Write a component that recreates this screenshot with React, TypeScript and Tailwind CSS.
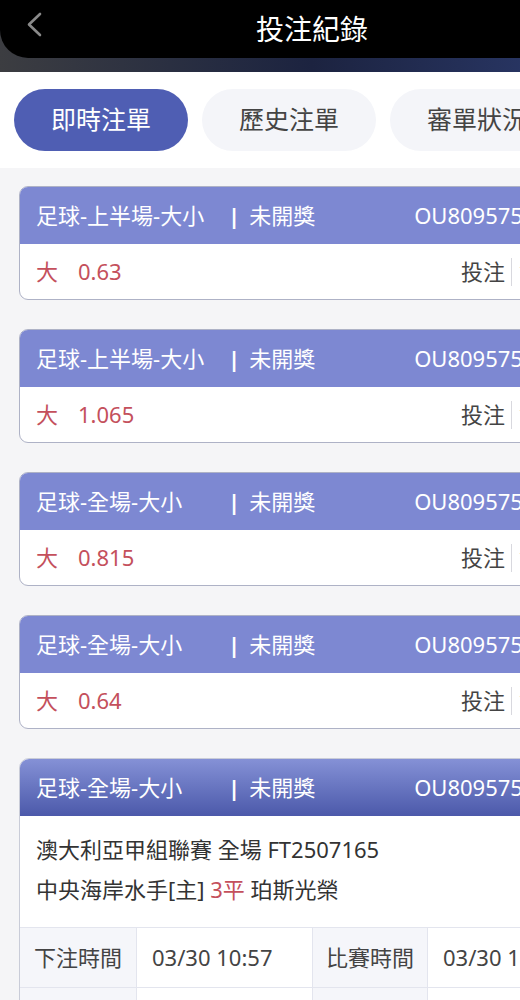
import React from "react";

const BETS = [
  { type: "足球-上半場-大小", pick: "大", odds: "0.63" },
  { type: "足球-上半場-大小", pick: "大", odds: "1.065" },
  { type: "足球-全場-大小", pick: "大", odds: "0.815" },
  { type: "足球-全場-大小", pick: "大", odds: "0.64" },
];

const TABS = ["即時注單", "歷史注單", "審單狀況"];

function CardHeader({ type, gradient }: { type: string; gradient?: boolean }) {
  return (
    <div
      className={
        "flex h-[57px] items-center pl-[16px] text-[22px] text-white " +
        (gradient ? "bg-gradient-to-b from-[#8591d6] to-[#4c59aa]" : "bg-[#7d88d2]")
      }
    >
      <span className="w-[192px] shrink-0">{type}</span>
      <span className="font-bold">|</span>
      <span className="ml-[9px] w-[165px] shrink-0">未開獎</span>
      <span className="whitespace-nowrap">OU8095751428</span>
    </div>
  );
}

export default function App() {
  return (
    <div
      className="min-h-[1000px] w-full overflow-hidden bg-[#f5f5f7]"
      style={{ fontFamily: '"Noto Sans", "Noto Sans CJK TC", sans-serif' }}
    >
      <div className="w-[624px]">
        {/* ── 頂部標題 ── */}
        <div className="h-[72px] bg-gradient-to-r from-[#3c3d41] via-[#1c2340] to-[#2d3d72]">
          <div className="relative flex h-[58px] items-center justify-center rounded-b-[28px] bg-black">
            <svg className="absolute left-[24px] top-[11px]" width="24" height="28" viewBox="0 0 24 28" fill="none">
              <path d="M16 3 L5 13.5 L16 24" stroke="#8a8a8a" strokeWidth="2.6" strokeLinecap="round" strokeLinejoin="round" />
            </svg>
            <span className="text-[28px] text-white">投注紀錄</span>
          </div>
        </div>

        {/* ── 分頁 ── */}
        <div className="flex gap-[14px] bg-white px-[14px] py-[17px]">
          {TABS.map((t, i) => (
            <div
              key={t}
              className={
                "flex h-[62px] w-[174px] shrink-0 items-center justify-center rounded-full text-[25px] " +
                (i === 0 ? "bg-[#4f5eb3] text-white" : "bg-[#f4f5f9] text-[#444]")
              }
            >
              {t}
            </div>
          ))}
        </div>

        {/* ── 注單列表 ── */}
        <div className="flex flex-col gap-[29px] px-[19px] pt-[18px]">
          {BETS.map((b, i) => (
            <div key={i} className="overflow-hidden rounded-[9px] border border-[#aeb2c6] bg-white">
              <CardHeader type={b.type} />
              <div className="flex h-[55px] items-center pl-[16px] text-[22px]">
                <span className="text-[#c4505c]">{b.pick}</span>
                <span className="ml-[20px] text-[#c4505c]">{b.odds}</span>
                <span className="ml-auto text-[#444]">投注</span>
                <span className="mx-[6px] h-[28px] w-px bg-[#d8d8de]" />
                <span className="w-[86px] text-[#444]">100</span>
              </div>
            </div>
          ))}

          <div className="overflow-hidden rounded-t-[10px] border border-[#c9ccd8] bg-white">
            <CardHeader type="足球-全場-大小" gradient />
            <div className="px-[16px] pb-[18px] pt-[13px] text-[22px] leading-[40px] text-[#333]">
              <div>澳大利亞甲組聯賽 全場 FT2507165</div>
              <div>
                中央海岸水手[主] <span className="text-[#c4505c]">3平</span> 珀斯光榮
              </div>
            </div>
            <div className="grid grid-cols-[117px_176px_115px_1fr] border-t border-[#e3e5ee] text-[22px] text-[#444]">
              <div className="flex h-[60px] items-center justify-center border-r border-b border-[#e3e5ee] bg-[#f5f6fa]">下注時間</div>
              <div className="flex h-[60px] items-center pl-[15px] border-r border-b border-[#e3e5ee]">03/30 10:57</div>
              <div className="flex h-[60px] items-center justify-center border-r border-b border-[#e3e5ee] bg-[#f5f6fa]">比賽時間</div>
              <div className="flex h-[60px] items-center pl-[15px] border-b border-[#e3e5ee]">03/30 11:00</div>
              <div className="flex h-[60px] items-center justify-center border-r border-[#e3e5ee] bg-[#f5f6fa]">投注金額</div>
              <div className="flex h-[60px] items-center pl-[15px] border-r border-[#e3e5ee]">100</div>
              <div className="flex h-[60px] items-center justify-center border-r border-[#e3e5ee] bg-[#f5f6fa]">可贏金額</div>
              <div className="flex h-[60px] items-center pl-[15px]">64</div>
            </div>
          </div>
        </div>
      </div>
    </div>
  );
}
